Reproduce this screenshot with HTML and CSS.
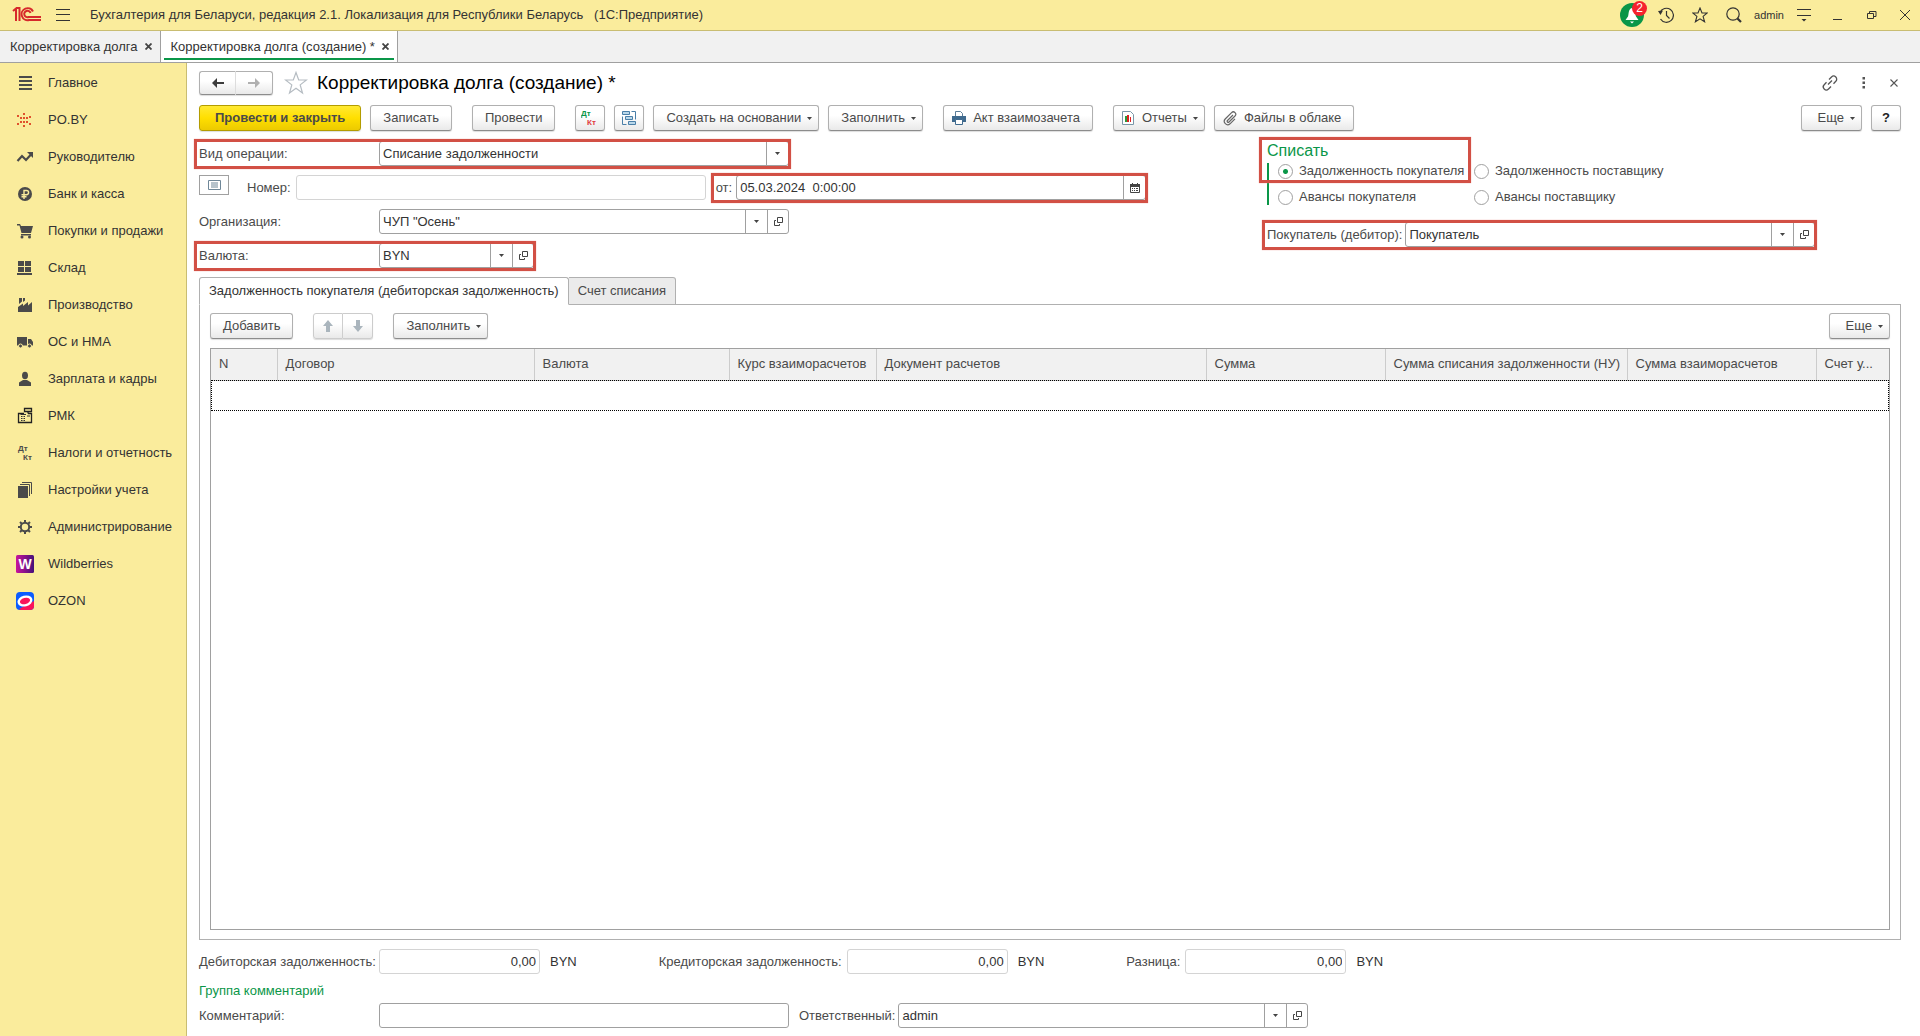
FILE: index.html
```html
<!DOCTYPE html>
<html lang="ru">
<head>
<meta charset="utf-8">
<title>Корректировка долга (создание) *</title>
<meta name="viewport" content="width=device-width, initial-scale=1">
<link rel="stylesheet" href="styles.css">
</head>
<body>
<svg class="defs" aria-hidden="true">
  <symbol id="i-open" viewBox="0 0 9 9"><path d="M3.500.5h5v5h-5zM2 3.500H.5v5h5V7" fill="none" stroke="#444"/></symbol>
  <symbol id="i-down" viewBox="0 0 5 3"><path d="M0 0h5L2.500 3z" fill="#444"/></symbol>
</svg>

<header class="titlebar">
  <svg class="logo" viewBox="0 0 30 16" width="30" height="16"><g fill="none" stroke="#d6292b" stroke-width="2"><path d="M1 4l3-2.500V14M7.500 14V1H5"/><path d="M21 4.500A6 6 0 1 0 17 13h12"/><path d="M18.500 6A3.200 3.200 0 1 0 16.500 10H29"/></g></svg>
  <button class="icon-btn menu-btn" aria-label="Главное меню"><svg viewBox="0 0 14 12" width="14" height="12"><path d="M0 .5h14M0 5.500h14M0 11.500h14" stroke="#333"/></svg></button>
  <span class="app-title">Бухгалтерия для Беларуси, редакция 2.1. Локализация для Республики Беларусь &nbsp; (1С:Предприятие)</span>
  <div class="title-tools">
    <button class="icon-btn bell" aria-label="Уведомления"><svg viewBox="0 0 24 24" width="24" height="24"><circle cx="12" cy="12" r="12" fill="#0a9648"/><path d="M12 5c-4 1-3 6-4 8.500L5.500 17h13L16 13.500C15 11 16 6 12 5zM10 18.500h4l-2 2z" fill="#fff"/></svg><span class="badge">2</span></button>
    <button class="icon-btn" aria-label="История"><svg viewBox="0 0 16 16" width="16" height="16"><g fill="none" stroke="#333" stroke-width="1.200"><path d="M2 5.500A7 7 0 1 1 2.500 12M8.500 4v4.500l3 3"/></g><path d="M0 4l5-.5L2.500 8z" fill="#333"/></svg></button>
    <button class="icon-btn" aria-label="Избранное"><svg viewBox="0 0 16 16" width="16" height="16"><path d="M8 1l2 5h5.200l-4.100 3.400 1.500 5.400L8 11.800l-4.600 3 1.500-5.400L.8 6H6z" fill="none" stroke="#333" stroke-width="1.100"/></svg></button>
    <button class="icon-btn" aria-label="Поиск"><svg viewBox="0 0 16 16" width="16" height="16"><circle cx="7" cy="7" r="6.200" fill="none" stroke="#333" stroke-width="1.200"/><path d="M11.500 11.500l3.500 3.500" stroke="#333" stroke-width="2.200"/></svg></button>
    <span class="user">admin</span>
    <button class="icon-btn" aria-label="Сервис"><svg viewBox="0 0 14 14" width="14" height="14"><path d="M0 1.500h14M0 7.500h14" stroke="#333"/><path d="M4.500 11h5L7 13.500z" fill="#333"/></svg></button>
    <button class="icon-btn" aria-label="Свернуть"><svg viewBox="0 0 10 10" width="10" height="10"><path d="M0 9.500h9" stroke="#333"/></svg></button>
    <button class="icon-btn" aria-label="Восстановить"><svg viewBox="0 0 10 10" width="10" height="10"><path d="M.5 3.500h6v5h-6zM2.500 3V1.500h6.500v5H7" fill="none" stroke="#333"/></svg></button>
    <button class="icon-btn" aria-label="Закрыть"><svg viewBox="0 0 10 10" width="10" height="10"><path d="M0 0l10 10M10 0L0 10" stroke="#333"/></svg></button>
  </div>
</header>

<nav class="doc-tabs" aria-label="Открытые окна">
  <div class="doc-tab"><a href="#list">Корректировка долга</a><button class="tab-close" aria-label="Закрыть"><svg viewBox="0 0 7 7" width="7" height="7"><path d="M.5.5l6 6M6.500.5l-6 6" stroke="#444" stroke-width="1.800"/></svg></button></div>
  <div class="doc-tab active"><a href="#new">Корректировка долга (создание) *</a><button class="tab-close" aria-label="Закрыть"><svg viewBox="0 0 7 7" width="7" height="7"><path d="M.5.5l6 6M6.500.5l-6 6" stroke="#444" stroke-width="1.800"/></svg></button></div>
</nav>

<div class="workspace">
  <nav class="sidebar" aria-label="Разделы">
    <a href="#main"><svg viewBox="0 0 18 18"><path d="M3 3h13M3 7h13M3 11h13M3 15h13" stroke="#4a4a4a" stroke-width="2"/></svg>Главное</a>
    <a href="#po"><svg viewBox="0 0 18 18"><path d="M7 2h2v2H7zM7 6h2v2H7zM7 10h2v2H7zM7 14h2v2H7zM4 6h2v2H4zM10 6h2v2h-2zM4 10h2v2H4zM10 10h2v2h-2zM1 4h2v2H1zM13 5h2v2h-2zM1 12h2v2H1zM13 12h2v2h-2z" fill="#e0522d"/></svg>PO.BY</a>
    <a href="#head"><svg viewBox="0 0 18 18"><path d="M1.500 13l4.500-5 4 4 5-5.500" fill="none" stroke="#4a4a4a" stroke-width="2.200"/><path d="M11 4h6v6z" fill="#4a4a4a"/></svg>Руководителю</a>
    <a href="#bank"><svg viewBox="0 0 18 18"><circle cx="9" cy="9" r="7" fill="#4a4a4a"/><path d="M8 14V5.500h2.500a2 2 0 0 1 0 4.200H5.500M5.500 11.700h5" fill="none" stroke="#faec9c" stroke-width="1.400"/></svg>Банк и касса</a>
    <a href="#sales"><svg viewBox="0 0 18 18"><path d="M1 2h3l1 2h12l-2 7H5.500L3.500 3.500H1zM5 12h10v1.500H5z" fill="#4a4a4a"/><circle cx="6" cy="15" r="1.500" fill="#4a4a4a"/><circle cx="13.500" cy="15" r="1.500" fill="#4a4a4a"/></svg>Покупки и продажи</a>
    <a href="#store"><svg viewBox="0 0 18 18"><path d="M2 2h6v5H2zM9 2h6v5H9zM2 8h6v5H2zM9 8h6v5H9zM1 14h15v2H1z" fill="#4a4a4a"/></svg>Склад</a>
    <a href="#prod"><svg viewBox="0 0 18 18"><path d="M2 16v-5l5-3.500V10l5-4v3.500L16 6v10zM3 2h3v3.500L3 8zM7 2h2v2.500L7 6z" fill="#4a4a4a"/></svg>Производство</a>
    <a href="#assets"><svg viewBox="0 0 18 18"><path d="M1 4h10v8.500H1zM12 6h3l2 3v3.500h-5z" fill="#4a4a4a"/><circle cx="4.500" cy="13" r="2" fill="#4a4a4a" stroke="#faec9c"/><circle cx="13.500" cy="13" r="2" fill="#4a4a4a" stroke="#faec9c"/></svg>ОС и НМА</a>
    <a href="#staff"><svg viewBox="0 0 18 18"><ellipse cx="9" cy="5.500" rx="3" ry="3.800" fill="#4a4a4a"/><path d="M3 16v-3.500l4-2.500h4l4 2.500V16z" fill="#4a4a4a"/></svg>Зарплата и кадры</a>
    <a href="#rmk"><svg viewBox="0 0 18 18"><path d="M8.500 1.500h7v3h-7zM12 4.500v2M8 6.500H2.500v9h13v-9H12" fill="none" stroke="#222" stroke-width="1.300"/><path d="M5 9.500h1.500M5 11.500h1.500M5 13.500h1.500M7.500 9.500H9M7.500 11.500H9M7.500 13.500H9M4.500 7.500H10M11 9h3" stroke="#333"/></svg>РМК</a>
    <a href="#tax"><svg viewBox="0 0 18 18" class="dtkt"><text x="2" y="7">Дт</text><text x="7" y="16">Кт</text></svg>Налоги и отчетность</a>
    <a href="#setup"><svg viewBox="0 0 18 18"><path d="M2 5h10v12H2z" fill="#4a4a4a"/><path d="M4 3.500h9.500V15M6 1.500h9.500V13" fill="none" stroke="#4a4a4a"/></svg>Настройки учета</a>
    <a href="#admin"><svg viewBox="0 0 18 18"><circle cx="9" cy="9" r="4.200" fill="none" stroke="#4a4a4a" stroke-width="2"/><path d="M9 2v2.500M9 13.500V16M2 9h2.500M13.500 9H16M4 4l2 2M12 12l2 2M14 4l-2 2M6 12l-2 2" stroke="#4a4a4a" stroke-width="2"/></svg>Администрирование</a>
    <a href="#wb"><svg viewBox="0 0 18 18"><defs><linearGradient id="wb"><stop stop-color="#c9149b"/><stop offset="1" stop-color="#45107a"/></linearGradient></defs><rect width="18" height="18" rx="1.500" fill="url(#wb)"/><text x="9" y="14" class="w">W</text></svg>Wildberries</a>
    <a href="#ozon"><svg viewBox="0 0 18 18"><rect width="18" height="18" rx="4" fill="#0a5cff"/><path d="M3 17L18 9v5a4 4 0 0 1-4 4H5z" fill="#f9155a"/><ellipse cx="9" cy="9" rx="6.400" ry="4.200" transform="rotate(-15 9 9)" fill="#f9155a" stroke="#fff" stroke-width="2.400"/></svg>OZON</a>
  </nav>

  <main class="content">
    <div class="page-head">
      <div class="btn-pair">
        <button class="btn" aria-label="Назад"><svg viewBox="0 0 14 12" width="14" height="12"><path d="M3 6h10" stroke="#3c3c3c" stroke-width="2"/><path d="M6 1v10L1 6z" fill="#3c3c3c"/></svg></button>
        <button class="btn" aria-label="Вперед"><svg viewBox="0 0 14 12" width="14" height="12"><path d="M1 6h10" stroke="#b0b0b0" stroke-width="2"/><path d="M8 1v10l5-5z" fill="#b0b0b0"/></svg></button>
      </div>
      <button class="icon-btn fav" aria-label="В избранное"><svg viewBox="0 0 24 24" width="24" height="24"><path d="M12 1.500l2.700 7.500H22.500l-6.300 4.900 2.300 8.100L12 17.300 5.500 22l2.300-8.100L1.500 9H9.300z" fill="#fff" stroke="#b5bcc2" stroke-width="1.200"/></svg></button>
      <h1>Корректировка долга (создание) *</h1>
      <div class="head-tools">
        <button class="icon-btn" aria-label="Ссылка"><svg viewBox="0 0 16 16" width="16" height="16"><path d="M6 9.500l4-4M7 4.500l2.500-2.500a3 3 0 0 1 4.300 4.300L11.500 8.700M9 11.500L6.500 14a3 3 0 0 1-4.300-4.300L4.500 7.300" fill="none" stroke="#555" stroke-width="1.300"/></svg></button>
        <button class="icon-btn" aria-label="Дополнительно"><svg viewBox="0 0 4 12" width="4" height="12"><path d="M.5 0h2.500v2.500H.5zM.5 4.500h2.500V7H.5zM.5 9h2.500v2.500H.5z" fill="#555"/></svg></button>
        <button class="icon-btn" aria-label="Закрыть"><svg viewBox="0 0 8 8" width="8" height="8"><path d="M.5.5l7 7M7.500.5l-7 7" stroke="#555" stroke-width="1.100"/></svg></button>
      </div>
    </div>

    <div class="toolbar">
      <button class="btn primary">Провести и закрыть</button>
      <button class="btn">Записать</button>
      <button class="btn apart">Провести</button>
      <button class="btn square apart" aria-label="Дт Кт"><svg viewBox="0 0 18 18" width="18" height="18" class="dtkt"><text x="0" y="7" class="green">Дт</text><text x="6" y="16" class="red">Кт</text></svg></button>
      <button class="btn square" aria-label="Структура подчиненности"><svg viewBox="0 0 16 16" width="16" height="16"><g fill="#b9d7ea" stroke="#4a7fa8"><path d="M1.500 1.500h7v3h-7zM4.500 6.500h7v3h-7zM7.500 11.500h7v3h-7z"/><path d="M10.500 1.500h4v8M5.500 14.500h-4v-8" fill="none"/></g></svg></button>
      <button class="btn drop">Создать на основании<svg class="caret"><use href="#i-down"/></svg></button>
      <button class="btn drop">Заполнить<svg class="caret"><use href="#i-down"/></svg></button>
      <button class="btn with-icon apart"><svg viewBox="0 0 16 16" width="16" height="16"><path d="M4.500 1.500h5l2 2V7h-7z" fill="#fff" stroke="#5b7d98"/><path d="M1 6h14v6H1z" fill="#3f6a8e"/><path d="M4.500 9.500h7v5h-7z" fill="#fff" stroke="#3f6a8e"/></svg>Акт взаимозачета</button>
      <button class="btn with-icon drop report apart"><svg viewBox="0 0 14 14" width="14" height="14"><path d="M1.500.5h8l3 3v10h-11z" fill="#fff" stroke="#7a97a8"/><path d="M4 5h2v6H4z" fill="#2a9a3c"/><path d="M6 4h2v7H6zM9 6h1v5H9z" fill="#d22"/></svg>Отчеты<svg class="caret"><use href="#i-down"/></svg></button>
      <button class="btn with-icon"><svg viewBox="0 0 16 16" width="16" height="16"><path d="M11 5l-5.500 5.500a1 1 0 0 0 1.500 1.500l6-6a2.300 2.300 0 0 0-3.400-3.400L3.200 9a3.400 3.400 0 0 0 4.800 4.800l5-5" fill="none" stroke="#666" stroke-width="1.200"/></svg>Файлы в облаке</button>
      <button class="btn drop push">Еще<svg class="caret"><use href="#i-down"/></svg></button>
      <button class="btn square help">?</button>
    </div>

    <form class="details">
      <div class="col-left">
        <div class="row">
          <div class="mark">
            <label class="lead" for="op">Вид операции:</label>
            <div class="field wide"><select id="op"><option>Списание задолженности</option></select><span class="cell"><svg class="caret"><use href="#i-down"/></svg></span></div>
          </div>
        </div>
        <div class="row number-row">
          <button type="button" class="list-btn" aria-label="Список"><svg viewBox="0 0 13 10" width="13" height="10"><path d="M.5.5h12v9H.5zM3 3h7M3 5h7M3 7h7" fill="none" stroke="#6f8798"/></svg></button>
          <label for="num">Номер:</label>
          <div class="field wide quiet"><input id="num" readonly></div>
          <div class="mark">
            <label for="date">от:</label>
            <div class="field wide"><input id="date" value="05.03.2024  0:00:00"><button type="button" class="cell" aria-label="Календарь"><svg viewBox="0 0 10 10" width="10" height="10"><path d="M.5 1.500h9v8h-9z" fill="#fff" stroke="#444"/><path d="M0 1h10v3H0zM2 0h1v1H2zM7 0h1v1H7zM2 5h1v1H2zM4 5h1v1H4zM6 5h2v1H6zM2 7h1v1H2zM4 7h1v1H4zM6 7h2v1H6z" fill="#444"/></svg></button></div>
          </div>
        </div>
        <div class="row">
          <label class="lead" for="org">Организация:</label>
          <div class="field wide"><input id="org" value='ЧУП "Осень"'><button type="button" class="cell" aria-label="Выбрать"><svg class="caret"><use href="#i-down"/></svg></button><button type="button" class="cell" aria-label="Открыть"><svg class="open"><use href="#i-open"/></svg></button></div>
        </div>
        <div class="row">
          <div class="mark">
            <label class="lead" for="cur">Валюта:</label>
            <div class="field short"><input id="cur" value="BYN"><button type="button" class="cell" aria-label="Выбрать"><svg class="caret"><use href="#i-down"/></svg></button><button type="button" class="cell" aria-label="Открыть"><svg class="open"><use href="#i-open"/></svg></button></div>
          </div>
        </div>
      </div>

      <div class="col-right">
        <fieldset class="writeoff">
          <legend>Списать</legend>
          <div class="choices">
            <label><input type="radio" name="w" checked>Задолженность покупателя</label>
            <label><input type="radio" name="w">Задолженность поставщику</label>
            <label><input type="radio" name="w">Авансы покупателя</label>
            <label><input type="radio" name="w">Авансы поставщику</label>
          </div>
        </fieldset>
        <div class="mark buyer">
          <label for="buyer">Покупатель (дебитор):</label>
          <div class="field wide"><input id="buyer" value="Покупатель"><button type="button" class="cell" aria-label="Выбрать"><svg class="caret"><use href="#i-down"/></svg></button><button type="button" class="cell" aria-label="Открыть"><svg class="open"><use href="#i-open"/></svg></button></div>
        </div>
      </div>
    </form>

    <div class="page-tabs" role="tablist">
      <button class="page-tab active" role="tab" aria-selected="true">Задолженность покупателя (дебиторская задолженность)</button>
      <button class="page-tab" role="tab" aria-selected="false">Счет списания</button>
    </div>
    <section class="panel">
      <div class="toolbar">
        <button class="btn">Добавить</button>
        <div class="btn-pair faded apart">
          <button class="btn" aria-label="Вверх"><svg viewBox="0 0 12 12" width="12" height="12"><path d="M6 0l5 6H8v6H4V6H1z" fill="#aab5bd"/></svg></button>
          <button class="btn" aria-label="Вниз"><svg viewBox="0 0 12 12" width="12" height="12"><path d="M6 12l5-6H8V0H4v6H1z" fill="#aab5bd"/></svg></button>
        </div>
        <button class="btn drop apart">Заполнить<svg class="caret"><use href="#i-down"/></svg></button>
        <button class="btn drop push">Еще<svg class="caret"><use href="#i-down"/></svg></button>
      </div>
      <div class="table-box">
        <table>
          <colgroup><col class="c1"><col class="c2"><col class="c3"><col class="c4"><col class="c5"><col class="c6"><col class="c7"><col class="c8"><col class="c9"></colgroup>
          <thead><tr><th>N</th><th>Договор</th><th>Валюта</th><th>Курс взаиморасчетов</th><th>Документ расчетов</th><th>Сумма</th><th>Сумма списания задолженности (НУ)</th><th>Сумма взаиморасчетов</th><th>Счет у...</th></tr></thead>
          <tbody><tr class="current"><td colspan="9"></td></tr></tbody>
        </table>
      </div>
    </section>

    <div class="totals">
      <div class="total"><label class="lead" for="t1">Дебиторская задолженность:</label><div class="field sum quiet"><input id="t1" value="0,00" readonly></div><span>BYN</span></div>
      <div class="total"><label for="t2">Кредиторская задолженность:</label><div class="field sum quiet"><input id="t2" value="0,00" readonly></div><span>BYN</span></div>
      <div class="total"><label for="t3">Разница:</label><div class="field sum quiet"><input id="t3" value="0,00" readonly></div><span>BYN</span></div>
    </div>
    <h2>Группа комментарий</h2>
    <div class="row">
      <label class="lead" for="note">Комментарий:</label>
      <div class="field wide"><input id="note"></div>
      <label class="resp" for="resp">Ответственный:</label>
      <div class="field wide"><input id="resp" value="admin"><button type="button" class="cell" aria-label="Выбрать"><svg class="caret"><use href="#i-down"/></svg></button><button type="button" class="cell" aria-label="Открыть"><svg class="open"><use href="#i-open"/></svg></button></div>
    </div>
  </main>
</div>
</body>
</html>
```
FILE: styles.css
```css
*, *::after { box-sizing: border-box; }

body {
  margin: 0;
  min-height: 100vh;
  display: flex;
  flex-direction: column;
  font: 13px/16px "Liberation Sans", Arial, sans-serif;
  color: #4a4a4a;
  background: #fff;
}

button, input, select { font: inherit; color: inherit; }
button { cursor: pointer; white-space: nowrap; }
svg { display: block; flex: none; }
label, legend, span { white-space: nowrap; }
.defs { position: absolute; width: 0; height: 0; }

.icon-btn {
  display: flex;
  align-items: center;
  justify-content: center;
  padding: 0;
  border: 0;
  background: none;
}

.caret { width: 5px; height: 3px; }
.open { width: 9px; height: 9px; }

.dtkt text { font: bold 8px "Liberation Sans", Arial, sans-serif; fill: #4a4a4a; }
.dtkt .green { fill: #0a9648; }
.dtkt .red { fill: #e03c3c; }
.w { font: bold 14px "Liberation Sans", Arial, sans-serif; fill: #fff; text-anchor: middle; }

/* Title bar */
.titlebar {
  display: flex;
  align-items: center;
  height: 31px;
  padding-left: 12px;
  background: #faec9c;
  border-bottom: 1px solid #c9bd72;
  color: #333;
}
.menu-btn { margin: 0 20px 0 14px; }
.title-tools { display: flex; align-items: center; margin-left: auto; }
.title-tools .icon-btn { width: 34px; }
.title-tools .icon-btn:last-child { width: 31px; }
.bell { position: relative; }
.badge {
  position: absolute;
  top: -2px;
  right: 2px;
  width: 15px;
  height: 15px;
  border-radius: 50%;
  background: #f5222d;
  color: #fff;
  font-size: 12px;
  line-height: 15px;
}
.user { width: 36px; font-size: 11px; text-align: center; }

/* Window tabs */
.doc-tabs {
  display: flex;
  height: 32px;
  background: #f1f1f1;
  border-bottom: 1px solid #a0a0a0;
}
.doc-tab {
  display: flex;
  align-items: center;
  gap: 4px;
  padding: 0 5px 0 10px;
  border-right: 1px solid #a0a0a0;
}
.doc-tab a { color: #333; text-decoration: none; white-space: nowrap; }
.doc-tab.active { background: #fff linear-gradient(#0a9648, #0a9648) center bottom 2px / calc(100% - 6px) 2px no-repeat; }
.tab-close { padding: 3px; border: 0; background: none; }

.workspace { flex: 1; display: flex; }

/* Sections */
.sidebar {
  flex: none;
  width: 187px;
  padding-top: 1px;
  background: #faec9c;
  border-right: 1px solid #c9bd72;
}
.sidebar a {
  display: flex;
  align-items: center;
  gap: 14px;
  height: 37px;
  padding-left: 16px;
  color: #333;
  text-decoration: none;
  white-space: nowrap;
}
.sidebar svg { width: 18px; height: 18px; }

/* Document form */
.content {
  flex: 1;
  min-width: 0;
  display: flex;
  flex-direction: column;
  padding: 8px 19px 8px 12px;
}

.page-head { display: flex; align-items: center; height: 24px; margin-bottom: 10px; }
.fav { margin: 0 9px 0 11px; }
h1 { margin: 0; font-size: 19px; line-height: 24px; font-weight: normal; color: #000; }
.head-tools { display: flex; align-items: center; gap: 24px; margin: 0 3px 0 auto; }

.btn {
  display: flex;
  align-items: center;
  justify-content: center;
  height: 26px;
  padding: 0 12px;
  border: 1px solid #b0b0b0;
  border-bottom-color: #8c8c8c;
  border-radius: 3px;
  background: linear-gradient(#fff 40%, #e9e9e9);
  box-shadow: 0 1px 1px #ddd;
}
.btn.primary {
  padding: 0 15px;
  border-color: #b39c00;
  background: linear-gradient(#ffe933, #ffdf00 50%, #ecca00);
  font-weight: bold;
}
.btn.drop { padding-right: 6px; gap: 6px; }
.btn.square { width: 30px; padding: 0; }
.btn.with-icon { padding-left: 7px; }
.btn.with-icon svg:first-child { margin-right: 6px; }
.btn.report svg:first-child { margin-right: 1px; }
.btn.help { font-weight: bold; color: #222; }

.btn-pair { display: flex; }
.btn-pair .btn { width: 37px; height: 24px; padding: 0; }
.btn-pair .btn:first-child { border-radius: 3px 0 0 3px; border-right-color: #ddd; }
.btn-pair .btn:last-child { border-radius: 0 3px 3px 0; border-left: 0; }
.btn-pair.faded .btn { width: 30px; height: 26px; border-color: #ccc; }

.toolbar { display: flex; gap: 9px; }
.toolbar .apart { margin-left: 11px; }
.toolbar .push { margin-left: auto; padding-left: 16px; }

.details { display: flex; margin-top: 10px; }
.col-left { flex: 0 0 1068px; display: flex; flex-direction: column; gap: 9px; }
.col-right { flex: 1; }

.row { display: flex; align-items: center; height: 25px; }
.lead { flex: none; width: 180px; }

.field {
  display: flex;
  height: 25px;
  border: 1px solid #a0a0a0;
  border-radius: 3px;
  background: #fff;
  color: #333;
}
.field input, .field select {
  flex: 1;
  min-width: 0;
  padding: 0 3px;
  border: 0;
  outline: 0;
  background: none;
  appearance: none;
  white-space: pre;
}
.field.wide { width: 410px; }
.field.short { width: 155px; }
.field.sum { width: 161px; }
.field.sum input { text-align: right; }
.field.quiet { border-color: #d4d4d4; }
.cell {
  display: flex;
  align-items: center;
  justify-content: center;
  width: 22px;
  padding: 0;
  border: 0;
  border-left: 1px solid #a0a0a0;
  background: none;
}
.cell + .cell { width: 21px; }

/* Red frames drawn over the fields to fill in */
.mark { position: relative; display: flex; align-items: center; }
.mark::after, .col-right::before {
  content: "";
  position: absolute;
  inset: -2px -2px -3px -5px;
  border: 3px solid #d25045;
  box-shadow: 0 0 1px #e99a92;
  pointer-events: none;
}
.col-right { position: relative; }
.col-right::before {
  box-sizing: border-box;
  inset: -4px auto auto -8px;
  z-index: 1;
  width: 212px;
  height: 46px;
}

.number-row { gap: 5px; }
.list-btn {
  display: flex;
  align-items: center;
  justify-content: center;
  width: 30px;
  height: 20px;
  margin: 0 13px 5px 0;
  padding: 0;
  border: 1px solid #a0a0a0;
  background: #fff;
}
.number-row .mark { margin-left: 5px; gap: 4px; }

.writeoff { margin: 0; padding: 0; border: 0; }
legend { padding: 0; font-size: 16px; line-height: 20px; color: #0a9648; }
.choices {
  display: grid;
  grid-template-columns: 196px max-content;
  row-gap: 10px;
  margin-top: 2px;
  padding-left: 9px;
  border-left: 2px solid #0a9648;
}
.choices label { display: flex; align-items: center; gap: 6px; }
.choices input {
  appearance: none;
  width: 15px;
  height: 15px;
  margin: 0;
  border: 1px solid #a0a0a0;
  border-radius: 50%;
  background: #fff;
}
.choices input:checked { background: radial-gradient(#0a9648 2px, #fff 3px); }
.buyer { width: max-content; gap: 3px; margin-top: 17px; }

/* Tabbed list */
.page-tabs { display: flex; height: 28px; margin-top: 9px; z-index: 1; }
.page-tab {
  padding: 0 9px;
  border: 1px solid #b0b0b0;
  border-left: 0;
  border-radius: 0 3px 0 0;
  background: #ebebeb;
}
.page-tab.active {
  border-left: 1px solid #b0b0b0;
  border-bottom-color: #fff;
  border-radius: 3px 3px 0 0;
  background: #fff;
  color: #333;
}
.panel {
  flex: 1;
  display: flex;
  flex-direction: column;
  gap: 9px;
  margin-top: -1px;
  padding: 8px 10px 9px;
  border: 1px solid #b0b0b0;
}

.table-box { flex: 1; border: 1px solid #a0a0a0; }
table { width: 100%; table-layout: fixed; border-collapse: collapse; }
th {
  height: 31px;
  padding: 0 8px;
  border-right: 1px solid #ccc;
  border-bottom: 1px solid #ccc;
  background: #f1f1f1;
  font-weight: normal;
  text-align: left;
  white-space: nowrap;
  overflow: hidden;
}
th:last-child { border-right: 0; }
.current td { height: 31px; padding: 0; outline: 1px dotted #000; outline-offset: -1px; }
.c1 { width: 66px; }
.c2 { width: 257px; }
.c3 { width: 195px; }
.c4 { width: 147px; }
.c5 { width: 330px; }
.c6 { width: 179px; }
.c7 { width: 242px; }
.c8 { width: 189px; }

/* Footer */
.totals { display: flex; gap: 82px; margin-top: 9px; }
.total { display: flex; align-items: center; gap: 10px; }
.total label { margin-right: -5px; }
.total .lead { margin-right: -10px; }
.total span { color: #333; }
h2 { margin: 9px 0 4px; font-size: 13px; line-height: 16px; font-weight: normal; color: #0a9648; }
.resp { margin: 0 3px 0 10px; }
```
